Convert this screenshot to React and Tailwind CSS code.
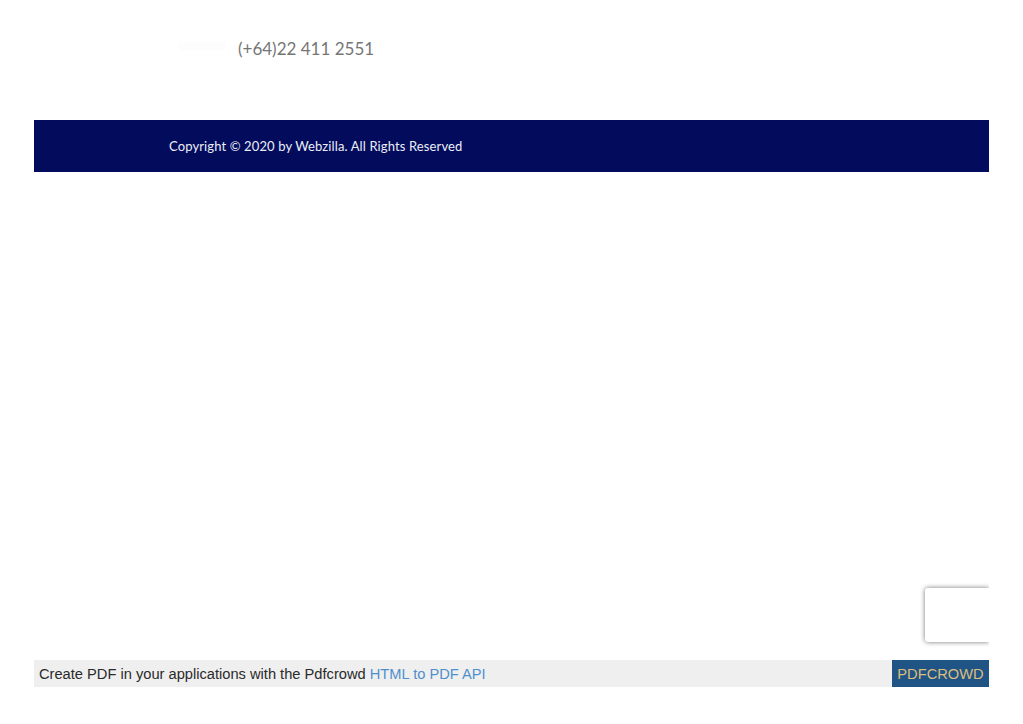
export default function App() {
  return (
    <div className="relative flex h-[724px] w-[1023px] flex-col overflow-hidden bg-white px-[34px] font-['Liberation_Sans',sans-serif]">
      {/* phone row */}
      <div className="flex h-[120px] items-start pl-[144px] pt-[37px]">
        <div className="mr-[12px] mt-[5px] h-[9px] w-[48px] shrink-0 rounded-sm bg-[#fdfdfd]" />
        <p className="font-['Lato',sans-serif] text-[17px] leading-[24px] text-[#757575]">(+64)22 411 2551</p>
      </div>

      {/* copyright bar */}
      <div className="flex h-[52px] items-center bg-[#020b5c] pl-[135px]">
        <p className="pt-px font-['Lato',sans-serif] text-[13px] tracking-[0.12px] text-[#eceef6]">Copyright © 2020 by Webzilla. All Rights Reserved</p>
      </div>

      <div className="flex-1" />

      {/* pdfcrowd banner */}
      <div className="mb-[37px] flex h-[27px] items-stretch bg-[#efefef] text-[14.67px]">
        <p className="flex-1 pl-[5px] pt-px leading-[27px] text-[#2a2a2a]">
          Create PDF in your applications with the Pdfcrowd <span className="text-[#4f8fcc]">HTML to PDF API</span>
        </p>
        <div className="flex w-[97px] items-center justify-center bg-[#1f5484] pt-px text-[#dcbd80]">PDFCROWD</div>
      </div>

      {/* recaptcha badge */}
      <div className="absolute right-[34px] top-[588px] h-[54px] w-[64px] rounded-l-[3px] bg-white shadow-[0_0_5px_rgba(0,0,0,0.55)] [clip-path:inset(-10px_0_-10px_-10px)]" />
    </div>
  );
}
